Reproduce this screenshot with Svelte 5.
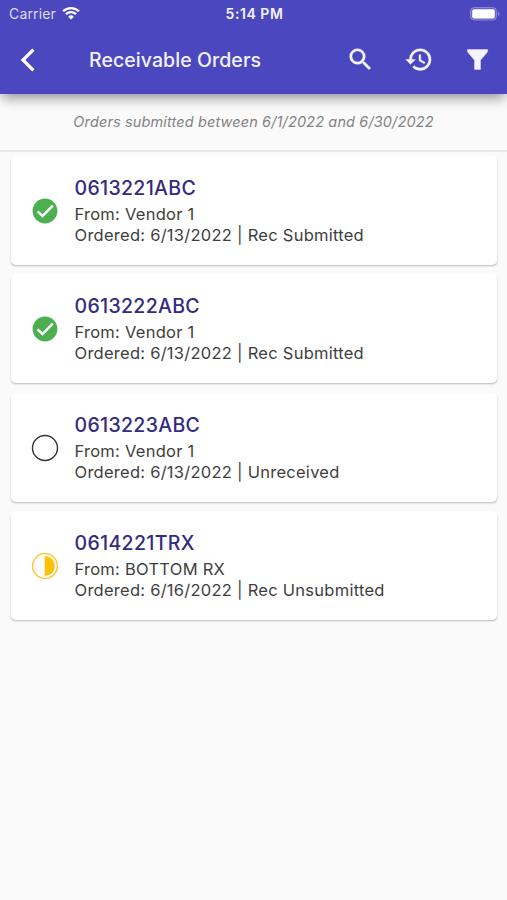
<script lang="ts">
  type Status = 'submitted' | 'unreceived' | 'unsubmitted';

  interface Order {
    id: string;
    vendor: string;
    date: string;
    status: Status;
  }

  const statusText = {
    submitted: 'Rec Submitted',
    unreceived: 'Unreceived',
    unsubmitted: 'Rec Unsubmitted'
  };

  const startDate = '6/1/2022';
  const endDate = '6/30/2022';

  let orders: Order[] = [
    { id: '0613221ABC', vendor: 'Vendor 1', date: '6/13/2022', status: 'submitted' },
    { id: '0613222ABC', vendor: 'Vendor 1', date: '6/13/2022', status: 'submitted' },
    { id: '0613223ABC', vendor: 'Vendor 1', date: '6/13/2022', status: 'unreceived' },
    { id: '0614221TRX', vendor: 'BOTTOM RX', date: '6/16/2022', status: 'unsubmitted' }
  ];
</script>

<div class="screen">
  <header>
    <div class="status-bar">
      <div class="carrier">
        <span>Carrier</span>
        <svg class="wifi" viewBox="0 0 18 14">
          <path d="M1.1 5.3a11.2 11.2 0 0 1 15.8 0M3.9 8.2a7.2 7.2 0 0 1 10.2 0" />
          <path class="dot" d="M9 13.6l-2.9-2.9a4.1 4.1 0 0 1 5.8 0z" />
        </svg>
      </div>
      <span class="time">5:14 PM</span>
      <div class="battery-wrap">
        <svg class="battery" viewBox="0 0 30 14">
          <rect x="0.5" y="0.5" width="26" height="12.6" rx="3.6" fill="#fff" fill-opacity="0.16" stroke="#fff" stroke-opacity="0.28" />
          <rect x="2.2" y="2.2" width="22.6" height="9.2" rx="2" fill="#fff" />
          <path d="M28 4.6c2 .8 2 3.6 0 4.4z" fill="#fff" fill-opacity="0.4" />
        </svg>
      </div>
    </div>

    <div class="toolbar">
      <button class="back" aria-label="Back">
        <svg viewBox="0 0 15 24"><path d="M13.4 1.6L3 12l10.4 10.4" /></svg>
      </button>
      <h1>Receivable Orders</h1>
      <div class="actions">
        <button aria-label="Search">
          <svg viewBox="0 0 24 24">
            <path d="M15.5 14h-.79l-.28-.27A6.47 6.47 0 0 0 16 9.5 6.5 6.5 0 1 0 9.5 16c1.61 0 3.09-.59 4.23-1.57l.27.28v.79l5 4.99L20.49 19l-4.99-5zm-6 0C7.01 14 5 11.99 5 9.5S7.01 5 9.5 5 14 7.01 14 9.5 11.99 14 9.5 14z" />
          </svg>
        </button>
        <button aria-label="History">
          <svg viewBox="0.4 0 24 24">
            <path d="M13 3a9 9 0 0 0-9 9H1l3.89 3.89.07.14L9 12H6c0-3.87 3.13-7 7-7s7 3.13 7 7-3.13 7-7 7c-1.93 0-3.68-.79-4.94-2.06l-1.42 1.42A8.95 8.95 0 0 0 13 21a9 9 0 0 0 0-18zm-1 5v5l4.28 2.54.72-1.21-3.5-2.08V8H12z" />
          </svg>
        </button>
        <button aria-label="Filter">
          <svg viewBox="0 0 24 24">
            <path d="M3.6 3.8h16.8v1.7L14.5 12.6v7.6h-5v-7.6L3.6 5.5z" />
          </svg>
        </button>
      </div>
    </div>
  </header>

  <p class="range">Orders submitted between {startDate} and {endDate}</p>

  <ul class="orders">
    {#each orders as order}
      <li class="card">
        <svg class="status-icon" viewBox="0 0 28 28">
          {#if order.status === 'submitted'}
            <circle cx="14" cy="14" r="12.4" fill="#4caf50" />
            <path d="M6.6 14.3l4.9 4.8L21.8 8.6" fill="none" stroke="#fff" stroke-width="2.5" />
          {:else if order.status === 'unreceived'}
            <circle cx="14" cy="14" r="12.5" fill="none" stroke="#333" stroke-width="1.4" />
          {:else}
            <circle cx="14" cy="14" r="12.4" fill="none" stroke="#ffc83a" stroke-width="1.5" />
            <path d="M13.7 3.9a10.1 10.1 0 0 1 0 20.2z" fill="#ffc107" />
          {/if}
        </svg>
        <div class="details">
          <h2>{order.id}</h2>
          <p>From: {order.vendor}</p>
          <p>Ordered: {order.date} | {statusText[order.status]}</p>
        </div>
      </li>
    {/each}
  </ul>
</div>

<style>
  :global(body) {
    background: #fafafa;
  }

  .screen {
    min-height: 100vh;
    background: #fafafa;
    font-family: Inter, 'Liberation Sans', sans-serif;
    color: #3e3e3e;
    overflow: hidden;
  }

  /* Header */
  header {
    position: relative;
    height: 94px;
    background: #4b48bf;
    color: #f3f2fc;
    box-shadow: 0 6px 12px -2px rgba(0, 0, 0, 0.42);
  }

  .status-bar {
    display: grid;
    grid-template-columns: 1fr auto 1fr;
    align-items: center;
    height: 27px;
    padding: 0 7px 0 9px;
    font-size: 14px;
  }

  .carrier {
    display: flex;
    align-items: center;
    gap: 6px;
    color: #dedcf7;
    letter-spacing: 0.15px;
  }

  .wifi {
    width: 18px;
    height: 14px;
    margin-top: -2px;
    fill: none;
    stroke: #fff;
    stroke-width: 2.3;
  }

  .wifi .dot {
    fill: #fff;
    stroke: none;
  }

  .time {
    font-size: 14px;
    font-weight: 600;
    letter-spacing: 0.55px;
  }

  .battery-wrap {
    display: flex;
    justify-content: flex-end;
  }

  .battery {
    width: 30px;
    height: 14px;
  }

  .toolbar {
    display: flex;
    align-items: center;
    height: 65px;
    padding: 0 15px 0 20px;
  }

  button {
    display: flex;
    padding: 0;
    border: none;
    background: none;
    cursor: pointer;
  }

  .back svg {
    width: 15px;
    height: 24px;
    fill: none;
    stroke: #fff;
    stroke-width: 3.2;
  }

  h1 {
    flex: 1;
    margin: 0 0 0 54px;
    font-size: 19.5px;
    font-weight: 500;
    letter-spacing: 0.07px;
  }

  .actions {
    display: flex;
    gap: 29.5px;
  }

  .actions svg {
    width: 29px;
    height: 29px;
    fill: #f6f5ff;
    stroke: #f6f5ff;
    stroke-width: 0.3;
  }

  /* Date range */
  .range {
    box-sizing: border-box;
    height: 58px;
    margin: 0;
    border-bottom: 2px solid #e9e9e9;
    font-size: 14.5px;
    font-style: italic;
    line-height: 56px;
    letter-spacing: 0.13px;
    text-align: center;
    color: #838383;
  }

  /* Orders */
  .orders {
    display: flex;
    flex-direction: column;
    gap: 9.5px;
    margin: 0;
    padding: 3.5px 10px 0 11px;
    list-style: none;
  }

  .card {
    box-sizing: border-box;
    display: flex;
    align-items: center;
    gap: 15.5px;
    height: 109px;
    padding: 1px 20px 0;
    border-radius: 5px;
    background: #fff;
    box-shadow: 0 1.5px 2px -0.5px rgba(0, 0, 0, 0.26);
  }

  .status-icon {
    flex: none;
    width: 28px;
    height: 28px;
  }

  .details {
    margin-top: -1px;
  }

  h2 {
    margin: 0 0 3px;
    font-size: 19.5px;
    font-weight: 500;
    line-height: 26px;
    letter-spacing: 0.33px;
    color: #332b80;
  }

  .details p {
    margin: 0;
    font-size: 16.5px;
    line-height: 21px;
    letter-spacing: 0.26px;
  }
</style>
